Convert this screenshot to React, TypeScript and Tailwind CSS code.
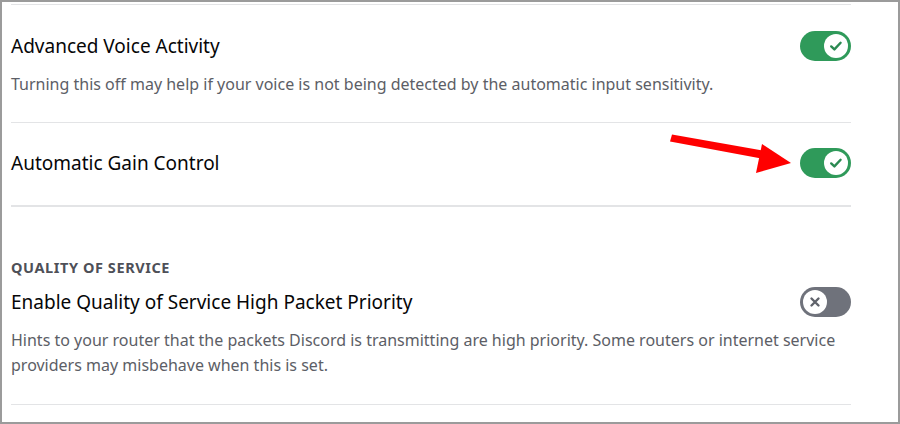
import React from "react";

function Toggle({ on }: { on: boolean }) {
  return (
    <div
      className={
        "relative h-[30px] w-[51px] shrink-0 rounded-full flex items-center px-[3px] " +
        (on ? "bg-[#2f9a5a] justify-end" : "bg-[#6f727b] justify-start")
      }
    >
      <div className="h-[24px] w-[24px] rounded-full bg-white flex items-center justify-center">
        {on ? (
          <svg width="16" height="16" viewBox="0 0 16 16" fill="none">
            <path
              d="M3.2 8.4 L6.4 11.4 L12.6 4.8"
              stroke="#2b8a52"
              strokeWidth="2.4"
              strokeLinecap="round"
              strokeLinejoin="round"
            />
          </svg>
        ) : (
          <svg width="16" height="16" viewBox="0 0 16 16" fill="none">
            <path
              d="M4.5 4.5 L11.5 11.5 M11.5 4.5 L4.5 11.5"
              stroke="#60636b"
              strokeWidth="2.4"
              strokeLinecap="round"
            />
          </svg>
        )}
      </div>
    </div>
  );
}

export default function App() {
  const font = { fontFamily: '"Noto Sans", "Open Sans", sans-serif' };
  return (
    <div
      className="relative w-[900px] h-[424px] bg-white border-2 border-[#9b9b9b] pl-[9px] pr-[47px] overflow-hidden"
      style={font}
    >
      <div className="flex flex-col w-[840px]">
        <div className="mt-[2px] h-px bg-[#e3e4e6]" />
        <div className="mt-[26px] h-[30px] flex items-center justify-between">
          <div className="text-[19px] leading-[30px] text-[#060607]">Advanced Voice Activity</div>
          <Toggle on />
        </div>
        <div className="mt-[11px] text-[16px] leading-[24px] text-[#5c5e66]">
          Turning this off may help if your voice is not being detected by the automatic input sensitivity.
        </div>
        <div className="mt-[26px] h-px bg-[#e3e4e6]" />
        <div className="mt-[25px] h-[30px] flex items-center justify-between">
          <div className="text-[19px] leading-[30px] text-[#060607]">Automatic Gain Control</div>
          <Toggle on />
        </div>
        <div className="mt-[27px] h-[2px] bg-[#e3e4e6]" />
        <div className="mt-[50px] text-[14.5px] leading-[20px] font-bold tracking-[0.04em] text-[#4e5058]">
          QUALITY OF SERVICE
        </div>
        <div className="mt-[10px] h-[30px] flex items-center justify-between">
          <div className="text-[19px] leading-[30px] text-[#060607]">
            Enable Quality of Service High Packet Priority
          </div>
          <Toggle on={false} />
        </div>
        <div className="mt-[11px] text-[16px] leading-[25px] text-[#5c5e66] pr-[10px]">
          Hints to your router that the packets Discord is transmitting are high priority. Some routers or internet service providers may misbehave when this is set.
        </div>
        <div className="mt-[26px] h-px bg-[#e3e4e6]" />
      </div>
      <svg
        className="absolute pointer-events-none"
        width="900"
        height="424"
        viewBox="0 0 900 424"
        style={{ left: -2, top: -2 }}
      >
        <path d="M672 134.5 L766 151 L764 159 L670 141.5 Z" fill="#ff0000" />
        <path d="M762 144 L791 163 L756 173 Z" fill="#ff0000" />
      </svg>
    </div>
  );
}
